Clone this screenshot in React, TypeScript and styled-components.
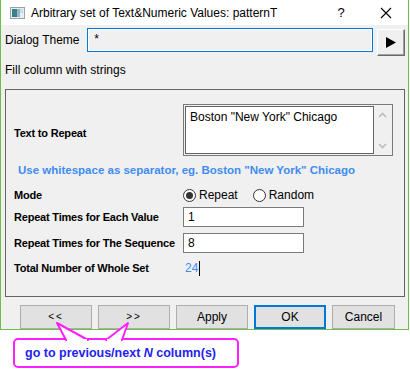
import React from 'react';
import styled, { createGlobalStyle } from 'styled-components';

const GlobalStyle = createGlobalStyle`
  html, body { margin: 0; padding: 0; background: #ffffff; }
  body { font-family: "Liberation Sans", Arial, sans-serif; }
  * { box-sizing: border-box; }
`;

const Page = styled.div`
  position: relative;
  width: 410px;
  height: 374px;
  background: #ffffff;
  overflow: hidden;
`;

const Window = styled.div`
  width: 409px;
  height: 330px;
  border-left: 1px solid #6fbe4a;
  border-right: 1px solid #6fbe4a;
  border-bottom: 1px solid #6fbe4a;
  display: flex;
  flex-direction: column;
`;

const TitleBar = styled.div`
  height: 30px;
  background: #ffffff;
  display: flex;
  align-items: center;
  padding-left: 9px;
  font-size: 12px;
  color: #000;
`;

const TitleText = styled.span`
  margin-left: 6px;
  flex: 1;
`;

const TitleButton = styled.span<{ $w: number }>`
  width: ${p => p.$w}px;
  display: flex;
  justify-content: center;
  align-items: center;
  font-size: 13px;
`;

const Body = styled.div`
  flex: 1;
  background: #f0f0f0;
  padding: 3px 3px 0 4px;
  display: flex;
  flex-direction: column;
`;

const ThemeRow = styled.div`
  display: flex;
  align-items: center;
  height: 28px;
`;

const Label = styled.span`
  font-size: 12px;
  color: #000;
`;

const ThemeLabel = styled(Label)`
  width: 83px;
  margin-top: -4px;
`;

const ThemeInput = styled.div`
  width: 289px;
  height: 24px;
  margin-top: -4px;
  border: 1px solid #0078d7;
  box-shadow: inset 0 0 0 1px #ffffff;
  background: #f0f0f0;
  font-size: 12px;
  padding: 3px 0 0 6px;
`;

const ArrowButton = styled.div`
  width: 28px;
  height: 27px;
  margin-left: 4px;
  background: #f0f0f0;
  border-top: 1px solid #ffffff;
  border-left: 1px solid #ffffff;
  border-right: 1px solid #696969;
  border-bottom: 1px solid #696969;
  box-shadow: inset -1px -1px 0 #a0a0a0;
  display: flex;
  align-items: center;
  justify-content: center;
`;

const SectionTitle = styled(Label)`
  margin-top: 7px;
  height: 16px;
`;

const Group = styled.div`
  margin-top: 10px;
  width: 400px;
  height: 208px;
  border: 1px solid #646464;
  padding: 14px 0 0 8px;
  display: flex;
  flex-direction: column;
`;

const Row = styled.div<{ $h: number; $mt?: number }>`
  display: grid;
  grid-template-columns: 169px 1fr;
  align-items: center;
  height: ${p => p.$h}px;
  margin-top: ${p => p.$mt ?? 0}px;
`;

const BoldLabel = styled.span<{ $shift?: number }>`
  font-size: 11px;
  font-weight: bold;
  color: #000;
  letter-spacing: -0.2px;
  white-space: nowrap;
  margin-top: ${p => p.$shift ?? 0}px;
`;

const TextBox = styled.div`
  width: 210px;
  height: 52px;
  border: 1px solid #7a7a7a;
  padding: 1px;
  display: flex;
  background: #f0f0f0;
`;

const TextArea = styled.div`
  flex: 1;
  background: #ffffff;
  border: 1px solid #646464;
  font-size: 12px;
  padding: 3px 0 0 4px;
  white-space: nowrap;
`;

const ScrollBar = styled.div`
  width: 17px;
  display: flex;
  flex-direction: column;
  justify-content: space-between;
  align-items: center;
  padding: 6px 0 5px;
`;

const Hint = styled.div`
  margin-top: 8px;
  height: 16px;
  padding-left: 4px;
  font-size: 11.5px;
  font-weight: bold;
  color: #3f8cf2;
  white-space: nowrap;
`;

const RadioGroup = styled.div`
  display: flex;
  align-items: center;
`;

const RadioItem = styled.label`
  display: flex;
  align-items: center;
  font-size: 12px;
  margin-right: 15px;
`;

const RadioCircle = styled.span<{ $on?: boolean }>`
  width: 13px;
  height: 13px;
  border-radius: 50%;
  border: 1px solid #333;
  background: #fff;
  margin-right: 3px;
  display: flex;
  align-items: center;
  justify-content: center;
  &::after {
    content: '';
    width: 7px;
    height: 7px;
    border-radius: 50%;
    background: ${p => (p.$on ? '#333' : 'transparent')};
  }
`;

const NumInput = styled.div`
  width: 121px;
  height: 20px;
  border: 1px solid #7a7a7a;
  background: #fff;
  font-size: 12px;
  padding: 2px 0 0 4px;
`;

const TotalValue = styled.span`
  font-size: 12px;
  color: #3f8cf2;
  padding-left: 2px;
  display: flex;
  align-items: center;
  &::after {
    content: '';
    width: 1px;
    height: 15px;
    background: #000;
    margin-left: 1px;
  }
`;

const ButtonRow = styled.div`
  display: flex;
  gap: 6px;
  padding-left: 15px;
  margin-top: 8px;
`;

const Button = styled.div<{ $w: number; $default?: boolean }>`
  width: ${p => p.$w}px;
  height: 24px;
  background: #e1e1e1;
  border: ${p => (p.$default ? '2px solid #0078d7' : '1px solid #adadad')};
  display: flex;
  align-items: center;
  justify-content: center;
  font-size: 12px;
  color: #000;
`;

const NavText = styled.span`
  font-size: 10px;
  letter-spacing: 2px;
  margin-top: -1px;
`;

const Callout = styled.div`
  position: absolute;
  left: 13px;
  top: 338px;
  width: 226px;
  height: 30px;
  border: 2px solid #ff20ff;
  border-radius: 5px;
  background: #fff;
  display: flex;
  align-items: center;
  padding-left: 10px;
  font-size: 12.5px;
  font-weight: bold;
  color: #2323f0;
  white-space: nowrap;
`;

const Tails = styled.svg`
  position: absolute;
  left: 0;
  top: 315px;
`;

const WinIcon = () => (
  <svg width="15" height="12" viewBox="0 0 15 12">
    <rect x="0.5" y="0.5" width="14" height="11" fill="#e8eef0" stroke="#9aa4a8" />
    <rect x="2" y="2" width="5" height="8" fill="#3a7f8a" />
    <rect x="7" y="2" width="3" height="8" fill="#8fb9c9" />
    <rect x="10" y="2" width="3" height="4" fill="#c6dbe4" />
  </svg>
);

const Chevron = ({ up }: { up?: boolean }) => (
  <svg width="9" height="6" viewBox="0 0 9 6">
    <polyline
      points={up ? '1,5 4.5,1.5 8,5' : '1,1 4.5,4.5 8,1'}
      fill="none"
      stroke="#bdbdbd"
      strokeWidth="1.6"
    />
  </svg>
);

export default function App() {
  return (
    <Page>
      <GlobalStyle />
      <Window>
        <TitleBar>
          <WinIcon />
          <TitleText>Arbitrary set of Text&amp;Numeric Values: patternT</TitleText>
          <TitleButton $w={46}>?</TitleButton>
          <TitleButton $w={44}>
            <svg width="12" height="12" viewBox="0 0 12 12">
              <path d="M1 1 L11 11 M11 1 L1 11" stroke="#000" strokeWidth="1.1" />
            </svg>
          </TitleButton>
        </TitleBar>
        <Body>
          <ThemeRow>
            <ThemeLabel>Dialog Theme</ThemeLabel>
            <ThemeInput>*</ThemeInput>
            <ArrowButton>
              <svg width="10" height="11" viewBox="0 0 10 11">
                <polygon points="0,0 10,5.5 0,11" fill="#000" />
              </svg>
            </ArrowButton>
          </ThemeRow>
          <SectionTitle>Fill column with strings</SectionTitle>
          <Group>
            <Row $h={52}>
              <BoldLabel $shift={6}>Text to Repeat</BoldLabel>
              <TextBox>
                <TextArea>Boston "New York" Chicago</TextArea>
                <ScrollBar>
                  <Chevron up />
                  <Chevron />
                </ScrollBar>
              </TextBox>
            </Row>
            <Hint>Use whitespace as separator, eg. Boston "New York" Chicago</Hint>
            <Row $h={16} $mt={7}>
              <BoldLabel>Mode</BoldLabel>
              <RadioGroup>
                <RadioItem>
                  <RadioCircle $on />
                  Repeat
                </RadioItem>
                <RadioItem>
                  <RadioCircle />
                  Random
                </RadioItem>
              </RadioGroup>
            </Row>
            <Row $h={20} $mt={4}>
              <BoldLabel>Repeat Times for Each Value</BoldLabel>
              <NumInput>1</NumInput>
            </Row>
            <Row $h={20} $mt={6}>
              <BoldLabel>Repeat Times for The Sequence</BoldLabel>
              <NumInput>8</NumInput>
            </Row>
            <Row $h={16} $mt={7}>
              <BoldLabel>Total Number of Whole Set</BoldLabel>
              <TotalValue>24</TotalValue>
            </Row>
          </Group>
          <ButtonRow>
            <Button $w={72}><NavText>&lt;&lt;</NavText></Button>
            <Button $w={72}><NavText>&gt;&gt;</NavText></Button>
            <Button $w={72}>Apply</Button>
            <Button $w={72} $default>OK</Button>
            <Button $w={63}>Cancel</Button>
          </ButtonRow>
        </Body>
      </Window>
      <Callout>
        go to previous/next&nbsp;<i>N</i>&nbsp;column(s)
      </Callout>
      <Tails width="160" height="26" viewBox="0 0 160 26">
        <polygon points="66,25 57,8 88,25" fill="#fff" stroke="#ff20ff" strokeWidth="2" strokeLinejoin="round" />
        <polygon points="106,25 128,8 122,25" fill="#fff" stroke="#ff20ff" strokeWidth="2" strokeLinejoin="round" />
        <rect x="67" y="24" width="20" height="4" fill="#fff" />
        <rect x="107" y="24" width="14" height="4" fill="#fff" />
      </Tails>
    </Page>
  );
}
